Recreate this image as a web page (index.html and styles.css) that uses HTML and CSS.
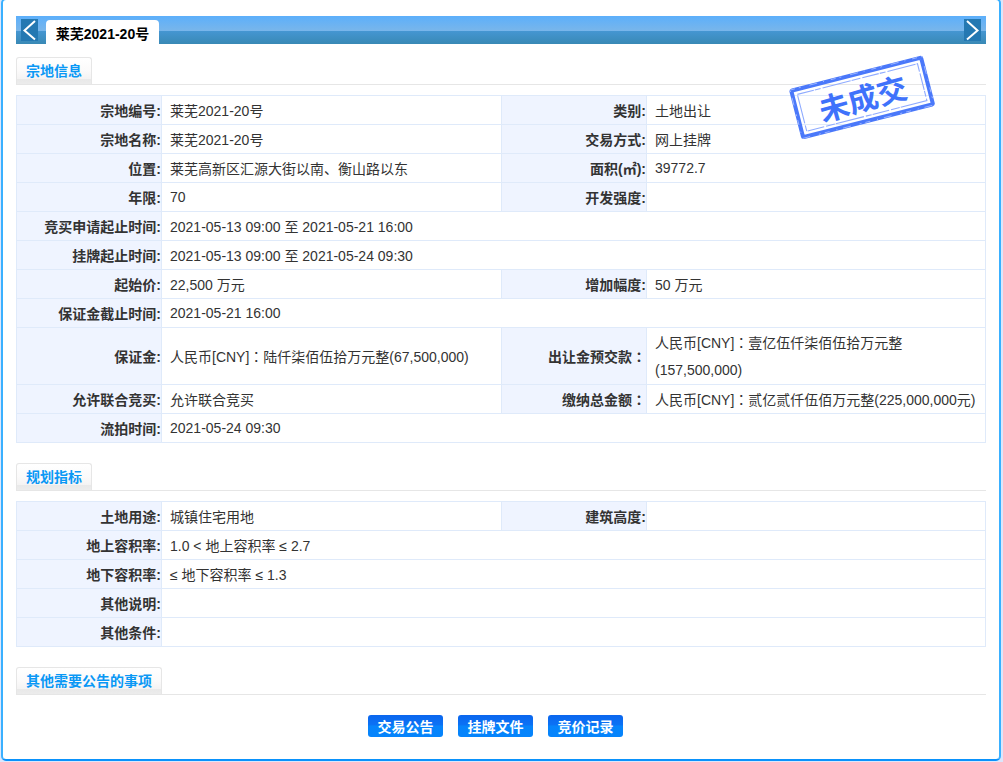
FILE: index.html
```
<!DOCTYPE html>
<html lang="zh-CN">
<head>
    <meta charset="UTF-8">
    <title>莱芜2021-20号</title>
    <link rel="stylesheet" href="styles.css">
</head>
<body>
    <div class="panel">
        <div class="tab-bar">
            <a href="#" class="arrow">
                <svg width="17" height="22" viewBox="0 0 17 22"><path d="M14 2 L3.5 11.5 L14 20.5"/></svg>
            </a>
            <span class="tab">莱芜2021-20号</span>
            <a href="#" class="arrow next">
                <svg width="17" height="22" viewBox="0 0 17 22"><path d="M3 2 L13.5 11.5 L3 20.5"/></svg>
            </a>
        </div>

        <svg class="stamp" width="150" height="90" viewBox="0 0 150 90">
            <g transform="rotate(-14.3 76 48)">
                <rect class="stamp-border" x="9" y="24.5" width="134" height="48" rx="1"/>
                <rect class="stamp-wear" x="8" y="23.5" width="136" height="50"/>
                <rect class="stamp-line" x="14" y="29.5" width="124" height="38"/>
            </g>
            <text class="stamp-text" x="77" y="61" text-anchor="middle" transform="rotate(-16 77 50)">未成交</text>
        </svg>

        <div class="title"><h2>宗地信息</h2></div>
        <table>
            <colgroup><col class="label"><col class="value"><col class="label"><col></colgroup>
            <tr><th>宗地编号:</th><td>莱芜2021-20号</td><th>类别:</th><td>土地出让</td></tr>
            <tr><th>宗地名称:</th><td>莱芜2021-20号</td><th>交易方式:</th><td>网上挂牌</td></tr>
            <tr><th>位置:</th><td>莱芜高新区汇源大街以南、衡山路以东</td><th>面积(㎡):</th><td class="num">39772.7</td></tr>
            <tr><th>年限:</th><td class="num">70</td><th>开发强度:</th><td></td></tr>
            <tr><th>竞买申请起止时间:</th><td colspan="3">2021-05-13 09:00 至 2021-05-21 16:00</td></tr>
            <tr><th>挂牌起止时间:</th><td colspan="3">2021-05-13 09:00 至 2021-05-24 09:30</td></tr>
            <tr><th>起始价:</th><td>22,500 万元</td><th>增加幅度:</th><td>50 万元</td></tr>
            <tr><th>保证金截止时间:</th><td colspan="3" class="num">2021-05-21 16:00</td></tr>
            <tr class="tall"><th>保证金:</th><td>人民币[CNY]<span class="colon" lang="zh-TW">：</span>陆仟柒佰伍拾万元整(67,500,000)</td><th>出让金预交款<span class="colon" lang="zh-TW">：</span></th><td class="lines">人民币[CNY]<span class="colon" lang="zh-TW">：</span>壹亿伍仟柒佰伍拾万元整<br>(157,500,000)</td></tr>
            <tr><th>允许联合竞买:</th><td>允许联合竞买</td><th>缴纳总金额<span class="colon" lang="zh-TW">：</span></th><td>人民币[CNY]<span class="colon" lang="zh-TW">：</span>贰亿贰仟伍佰万元整(225,000,000元)</td></tr>
            <tr><th>流拍时间:</th><td colspan="3" class="num">2021-05-24 09:30</td></tr>
        </table>

        <div class="title"><h2>规划指标</h2></div>
        <table>
            <colgroup><col class="label"><col class="value"><col class="label"><col></colgroup>
            <tr><th>土地用途:</th><td>城镇住宅用地</td><th>建筑高度:</th><td></td></tr>
            <tr><th>地上容积率:</th><td colspan="3">1.0 &lt; 地上容积率 ≤ 2.7</td></tr>
            <tr><th>地下容积率:</th><td colspan="3">≤ 地下容积率 ≤ 1.3</td></tr>
            <tr><th>其他说明:</th><td colspan="3"></td></tr>
            <tr><th>其他条件:</th><td colspan="3"></td></tr>
        </table>

        <div class="title"><h2>其他需要公告的事项</h2></div>
        <div class="buttons">
            <a href="#">交易公告</a>
            <a href="#">挂牌文件</a>
            <a href="#">竞价记录</a>
        </div>
    </div>
</body>
</html>
```

FILE: styles.css
```
* {
    box-sizing: border-box;
    margin: 0;
    padding: 0;
}
body {
    background: #dce6fb;
    font-family: "Liberation Sans", "Noto Sans CJK SC", sans-serif;
    font-size: 14px;
    color: #333;
    overflow: hidden;
}
.panel {
    position: relative;
    width: 1000px;
    height: 763px;
    margin: -2px 0 0 1px;
    padding: 16px 13px 0;
    background: #fff;
    border: 2px solid #3ab0ff;
    border-bottom-color: #0a92fb;
    border-radius: 5px;
}
.tab-bar {
    display: flex;
    height: 28px;
    width: 970px;
    padding: 3px 5px 0;
    background: linear-gradient(#5caffb, #79b6ea 15px, #4596d2 15px, #3989b5);
}
.arrow {
    width: 17px;
    height: 22px;
    background: #2478b2;
}
.arrow svg {
    display: block;
    fill: none;
    stroke: #fff;
    stroke-width: 2;
}
.arrow.next {
    margin-left: auto;
}
.tab {
    height: 24px;
    margin: 1px 0 0 8px;
    width: 113px;
    text-align: center;
    line-height: 29px;
    font-weight: bold;
    color: #000;
    background: #fff;
    border-radius: 4px 4px 0 0;
}
.title {
    width: 970px;
    height: 28px;
    margin-top: 13px;
    border-bottom: 1px solid #e6e6e6;
}
.title h2 {
    display: inline-block;
    height: 27px;
    padding: 0 9px;
    border: 1px solid #e6e6e6;
    border-bottom: 0;
    border-radius: 3px 3px 0 0;
    background: linear-gradient(#fff, #fbfafa 50%, #f4f3f3 80%, #e9e9e9 82%, #ececec);
    font-size: 14px;
    line-height: 27px;
    color: #0a98f5;
    vertical-align: top;
}
table {
    width: 970px;
    margin-top: 10px;
    border-collapse: collapse;
    table-layout: fixed;
}
table + .title {
    margin-top: 20px;
}
.label {
    width: 145px;
}
.value {
    width: 340px;
}
tr {
    height: 29px;
}
.tall {
    height: 57px;
}
th,
td {
    border: 1px solid #dfeafa;
    line-height: 25px;
    white-space: nowrap;
    padding-top: 3px;
}
th {
    background: #eff4ff;
    text-align: right;
}
td {
    padding-left: 8px;
    text-align: left;
}
.num {
    padding-top: 2px;
    padding-bottom: 1px;
}
.lines {
    padding-top: 1px;
    line-height: 27px;
}
/* full-width colon centred in its box */
.colon {
    font-family: "Noto Sans CJK TC", sans-serif;
    line-height: 1;
}
.buttons {
    display: flex;
    gap: 15px;
    justify-content: center;
    width: 970px;
    margin: 20px 0 0 -6px;
}
.buttons a {
    width: 75px;
    height: 22px;
    padding-left: 1px;
    text-align: center;
    line-height: 24px;
    font-weight: bold;
    text-decoration: none;
    color: #fff;
    background: linear-gradient(#0b66ee, #0b72f5 45%, #0684fb 50%, #0584fc);
    border-radius: 3px;
}
/* result stamp lying over the first table */
.stamp {
    position: absolute;
    left: 783px;
    top: 49px;
}
.stamp rect {
    fill: none;
}
.stamp .stamp-border {
    stroke: #4a78fa;
    stroke-width: 4;
}
.stamp .stamp-wear {
    stroke: #a9bfff;
    stroke-width: 0.8;
    stroke-dasharray: 5 4 2 9 8 6 1 7;
}
.stamp .stamp-line {
    stroke: #8fabff;
    stroke-width: 1.1;
    stroke-dasharray: 17 1 6 2 29 1 9 2;
}
.stamp-text {
    fill: #3f72fb;
    font-family: "Liberation Serif", "Noto Sans CJK SC", serif;
    font-size: 30px;
    font-weight: bold;
}
```
